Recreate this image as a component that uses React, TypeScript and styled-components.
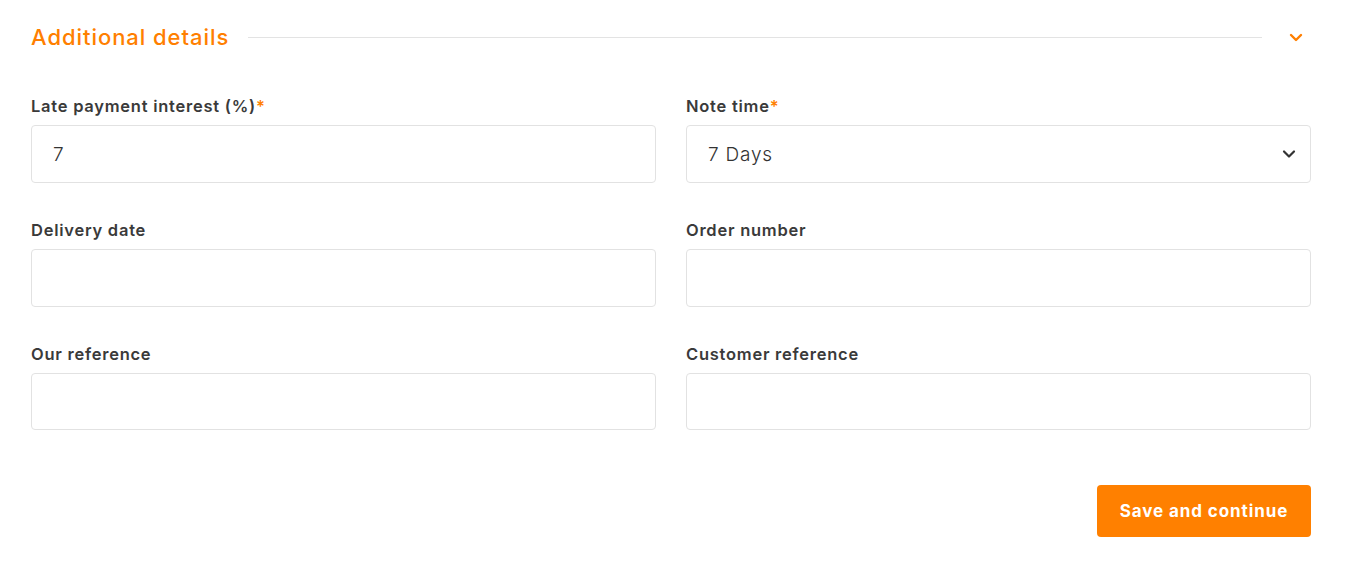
import React from "react";
import styled, { createGlobalStyle } from "styled-components";

const Global = createGlobalStyle`
  body { margin: 0; background: #fff; font-family: "Inter", "Noto Sans", sans-serif; }
  * { box-sizing: border-box; }
`;

const Page = styled.div`
  width: 1280px;
  margin-left: 31px;
  padding-top: 22px;
`;

const Header = styled.div`
  display: flex;
  align-items: center;
  height: 30px;
`;

const Title = styled.h2`
  margin: 0;
  font-size: 22px;
  font-weight: 500;
  letter-spacing: 0.95px;
  color: #ff7f00;
  white-space: nowrap;
`;

const Rule = styled.div`
  flex: 1;
  height: 1px;
  background: #e3e3e3;
  margin: 0 19px 0 19px;
`;

const Chevron = styled.button`
  border: 0;
  background: none;
  padding: 0;
  width: 30px;
  display: flex;
  justify-content: center;
  color: #ff7f00;
`;

const Grid = styled.div`
  display: grid;
  grid-template-columns: 1fr 1fr;
  column-gap: 30px;
  row-gap: 37px;
  margin-top: 44px;
`;

const Field = styled.div`
  display: flex;
  flex-direction: column;
`;

const Label = styled.label`
  font-size: 16.5px;
  font-weight: 600;
  letter-spacing: 0.75px;
  color: #3a3a3a;
  line-height: 20px;
  margin-bottom: 9px;
`;

const Star = styled.span`
  color: #ff7f00;
`;

const InputBox = styled.div<{ $short?: boolean }>`
  position: relative;
  height: ${(p) => (p.$short ? 57 : 58)}px;
  border: 1px solid #e2e2e2;
  border-radius: 4px;
  display: flex;
  align-items: center;
  padding: 0 21px;
`;

const Value = styled.span`
  font-size: 19px;
  font-weight: 300;
  letter-spacing: 0.8px;
  color: #333;
`;

const SelectIcon = styled.span`
  position: absolute;
  right: 14px;
  top: 50%;
  transform: translateY(-50%);
  display: flex;
  color: #333;
`;

const Footer = styled.div`
  display: flex;
  justify-content: flex-end;
  margin-top: 55px;
`;

const Button = styled.button`
  width: 214px;
  height: 52px;
  background: #ff8000;
  color: #fff;
  border: 0;
  border-radius: 4px;
  font-family: inherit;
  font-size: 17px;
  font-weight: 700;
  letter-spacing: 0.9px;
`;

const fields: { label: string; required?: boolean; value?: string; select?: boolean; short?: boolean }[] = [
  { label: "Late payment interest (%)", required: true, value: "7" },
  { label: "Note time", required: true, value: "7 Days", select: true },
  { label: "Delivery date" },
  { label: "Order number" },
  { label: "Our reference", short: true },
  { label: "Customer reference", short: true },
];

export default function App() {
  return (
    <Page>
      <Global />
      <Header>
        <Title>Additional details</Title>
        <Rule />
        <Chevron aria-label="collapse">
          <svg width="14" height="9" viewBox="0 0 14 9" fill="none">
            <path d="M2 2l5 5 5-5" stroke="currentColor" strokeWidth="2.4" strokeLinecap="round" strokeLinejoin="round" />
          </svg>
        </Chevron>
      </Header>
      <Grid>
        {fields.map((f) => (
          <Field key={f.label}>
            <Label>
              {f.label}
              {f.required && <Star>*</Star>}
            </Label>
            <InputBox $short={f.short}>
              {f.value && <Value>{f.value}</Value>}
              {f.select && (
                <SelectIcon>
                  <svg width="14" height="9" viewBox="0 0 14 9" fill="none">
                    <path d="M2 2l5 5 5-5" stroke="currentColor" strokeWidth="2.2" strokeLinecap="round" strokeLinejoin="round" />
                  </svg>
                </SelectIcon>
              )}
            </InputBox>
          </Field>
        ))}
      </Grid>
      <Footer>
        <Button>Save and continue</Button>
      </Footer>
    </Page>
  );
}
